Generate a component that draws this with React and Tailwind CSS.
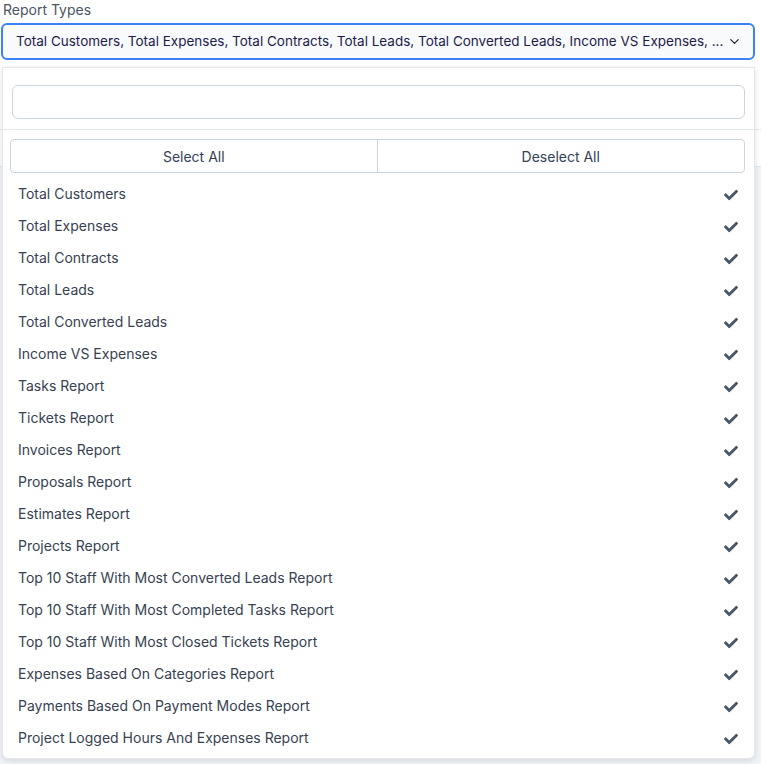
import { ChevronDown } from "lucide-react"
import { FaCheck } from "react-icons/fa"

const reportTypes = [
  "Total Customers",
  "Total Expenses",
  "Total Contracts",
  "Total Leads",
  "Total Converted Leads",
  "Income VS Expenses",
  "Tasks Report",
  "Tickets Report",
  "Invoices Report",
  "Proposals Report",
  "Estimates Report",
  "Projects Report",
  "Top 10 Staff With Most Converted Leads Report",
  "Top 10 Staff With Most Completed Tasks Report",
  "Top 10 Staff With Most Closed Tickets Report",
  "Expenses Based On Categories Report",
  "Payments Based On Payment Modes Report",
  "Project Logged Hours And Expenses Report",
]

export default function App() {
  return (
    <div
      className="relative h-[764px] w-[761px] overflow-hidden bg-white"
      style={{ fontFamily: "Inter, 'Noto Sans', sans-serif" }}
    >
      <div className="px-[1px] pr-[6px]">
        <label className="block pl-[2px] pt-[1px] text-[14px] leading-[17px] text-[#4b5563]">
          Report Types
        </label>
        <button
          type="button"
          className="mt-[5px] flex h-[37px] w-full items-center justify-between rounded-md border-2 border-[#3b82f6] bg-[#f8fafc] pl-[13px] pr-[16px] text-[13.5px] text-[#1e1b4b]"
        >
          <span className="whitespace-nowrap">
            Total Customers, Total Expenses, Total Contracts, Total Leads, Total Converted Leads, Income VS Expenses, ...
          </span>
          <ChevronDown className="ml-1 h-[15px] w-[15px] shrink-0 text-[#1e293b]" strokeWidth={2} />
        </button>
      </div>

      {/* page content behind the dropdown */}
      <div className="mt-[36px] border-b border-[#e2e8f0] h-[34px]" />
      <div className="h-[37px] border-b border-[#e2e8f0]" />
      <div className="h-full bg-[#f1f5f9]" />

      {/* dropdown menu */}
      <div className="absolute left-[2px] top-[67px] w-[753px] rounded-b-md border border-[#e5e7eb] bg-white shadow-[0_2px_6px_rgba(0,0,0,0.12)]">
        <div className="border-b border-[#e2e8f0] px-[9px] pb-[10px] pt-[17px]">
          <input
            type="text"
            className="h-[34px] w-full rounded-md border border-[#cbd5e1] bg-white px-3 text-[14px] outline-none"
          />
        </div>
        <div className="pl-[7px] pr-[9px] pt-[9px]">
          <div className="grid h-[34px] grid-cols-2 overflow-hidden rounded-[4px] border border-[#cbd5e1] text-[14px] text-[#334155]">
            <button type="button" className="border-r border-[#cbd5e1]">
              Select All
            </button>
            <button type="button">Deselect All</button>
          </div>
        </div>
        <ul className="pb-[5px] pt-[4px]">
          {reportTypes.map((item) => (
            <li
              key={item}
              className="flex h-[32px] items-center justify-between pl-[15px] pr-[16px] text-[14px] text-[#374151]"
            >
              <span>{item}</span>
              <FaCheck className="h-[14px] w-[14px] translate-y-[2px] text-[#475569]" />
            </li>
          ))}
        </ul>
      </div>
    </div>
  )
}
